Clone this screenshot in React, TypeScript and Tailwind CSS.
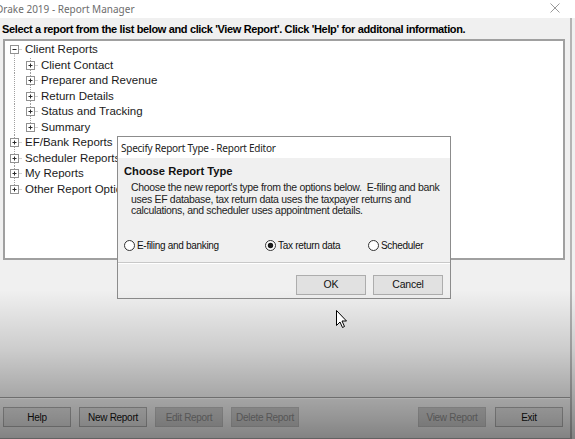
import React from "react";

type Pos = "first" | "mid" | "last" | "solo";

function Cell({ vline, box, hline = true }: { vline?: Pos | "full" | "none"; box?: "plus" | "minus"; hline?: boolean }) {
  let y0 = 0;
  let y1 = 15.5;
  if (vline === "first") y0 = 7.5;
  if (vline === "last") y1 = 7.5;
  return (
    <svg width="16" height="15.5" viewBox="0 0 16 15.5" className="shrink-0 block">
      {vline && vline !== "none" && (
        <line x1="8.5" y1={y0} x2="8.5" y2={y1} stroke="#a0a0a0" strokeWidth="1" strokeDasharray="1 1" />
      )}
      {hline && <line x1="8.5" y1="7.5" x2="16" y2="7.5" stroke="#a0a0a0" strokeWidth="1" strokeDasharray="1 1" />}
      {box && (
        <g>
          <rect x="4.5" y="3.5" width="8" height="8" fill="#ffffff" stroke="#919191" strokeWidth="1" />
          <line x1="6.5" y1="7.5" x2="10.5" y2="7.5" stroke="#2b2b2b" strokeWidth="1" />
          {box === "plus" && <line x1="8.5" y1="5.5" x2="8.5" y2="9.5" stroke="#2b2b2b" strokeWidth="1" />}
        </g>
      )}
    </svg>
  );
}

function TreeRow({ children, cells }: { children: React.ReactNode; cells: React.ReactNode }) {
  return (
    <div className="flex items-center h-[15.5px]">
      {cells}
      <span className="ml-[3px] whitespace-nowrap leading-none text-[11.5px] text-[#1a1a1a]">{children}</span>
    </div>
  );
}

function Btn({ children, disabled }: { children: React.ReactNode; disabled?: boolean }) {
  return (
    <div
      className={
        "w-[68px] h-[20px] flex items-center justify-center text-[10px] tracking-[-0.3px] whitespace-nowrap border " +
        (disabled
          ? "bg-[#cccccc] border-[#bfbfbf] text-[#8a8a8a]"
          : "bg-[#e1e1e1] border-[#adadad] text-[#111]")
      }
    >
      {children}
    </div>
  );
}

function Radio({ checked, label }: { checked?: boolean; label: string }) {
  return (
    <div className="flex items-center gap-[2px]">
      <svg width="11" height="11" viewBox="0 0 11 11" className="block">
        <circle cx="5.5" cy="5.5" r="5" fill="#ffffff" stroke="#333333" strokeWidth="1" />
        {checked && <circle cx="5.5" cy="5.5" r="2.7" fill="#1a1a1a" />}
      </svg>
      <span className="text-[10px] text-[#111] leading-none tracking-[-0.3px] whitespace-nowrap">{label}</span>
    </div>
  );
}

export default function App() {
  const level1 = ["Client Contact", "Preparer and Revenue", "Return Details", "Status and Tracking", "Summary"];
  const roots = ["EF/Bank Reports", "Scheduler Reports", "My Reports", "Other Report Options"];
  return (
    <div className="relative w-[575px] h-[439px] overflow-hidden bg-[#f0f0f0] font-['Liberation_Sans',Arial,sans-serif]">
      {/* title bar */}
      <div className="h-[18px] bg-white flex items-center justify-between">
        <span className="ml-[-4px] text-[10px] text-[#6d6d6d] font-['Noto_Sans',sans-serif] leading-none whitespace-nowrap">Drake 2019 - Report Manager</span>
        <svg width="10" height="10" viewBox="0 0 10 10" className="mr-[15px] mb-[2px]">
          <path d="M0.5 0.5 L9.5 9.5 M9.5 0.5 L0.5 9.5" stroke="#9a9a9a" strokeWidth="1" />
        </svg>
      </div>
      {/* window body */}
      <div className="w-[572px] h-[421px] border-r-2 border-[#b4b4b4] border-b flex flex-col">
        <div className="pt-[6px] pl-[2px] h-[21px] text-[11px] font-bold text-black leading-none whitespace-nowrap tracking-[-0.36px]">
          Select a report from the list below and click 'View Report'. Click 'Help' for additonal information.
        </div>
        <div className="ml-[3px] w-[562px] h-[221px] bg-white border-2 border-[#a0a0a0] pl-[1px] pt-[1px]">
          <TreeRow cells={<Cell vline="first" box="minus" />}>Client Reports</TreeRow>
          {level1.map((l, i) => (
            <TreeRow
              key={l}
              cells={
                <>
                  <Cell vline="full" hline={false} />
                  <Cell vline={i === level1.length - 1 ? "last" : "full"} box="plus" />
                </>
              }
            >
              {l}
            </TreeRow>
          ))}
          {roots.map((l, i) => (
            <TreeRow key={l} cells={<Cell vline={i === roots.length - 1 ? "last" : "full"} box="plus" />}>
              {l}
            </TreeRow>
          ))}
        </div>
        <div className="flex-1" />
        <div className="h-[2px] border-t border-[#a0a0a0] border-b border-b-white" />
        <div className="mt-[8px] mb-[11px] ml-[3px] w-[560px] flex justify-between">
          <div className="flex gap-[8px]">
            <Btn>Help</Btn>
            <Btn>New Report</Btn>
            <Btn disabled>Edit Report</Btn>
            <Btn disabled>Delete Report</Btn>
          </div>
          <div className="flex gap-[9px]">
            <Btn disabled>View Report</Btn>
            <Btn>Exit</Btn>
          </div>
        </div>
      </div>

      {/* dialog */}
      <div className="absolute left-[117px] top-[136px] w-[334px] h-[163px] border border-[#8c8c8c] bg-[#f0f0f0] flex flex-col">
        <div className="h-[21px] bg-white flex items-center pl-[3px]">
          <span className="text-[10px] text-[#222] font-['Noto_Sans',sans-serif] leading-none tracking-[-0.25px] whitespace-nowrap">Specify Report Type - Report Editor</span>
        </div>
        <div className="pl-[6px] pt-[8px] text-[11.2px] font-bold text-[#111] leading-none">Choose Report Type</div>
        <div className="pl-[13px] pt-[5px] text-[10.5px] leading-[11.6px] text-[#222] tracking-[-0.32px] whitespace-pre">
          {"Choose the new report's type from the options below.  E-filing and bank\nuses EF database, tax return data uses the taxpayer returns and\ncalculations, and scheduler uses appointment details."}
        </div>
        <div className="flex items-center pl-[6px] mt-[22px] h-[14px]">
          <div className="w-[141px]"><Radio label="E-filing and banking" /></div>
          <div className="w-[103px]"><Radio checked label="Tax return data" /></div>
          <Radio label="Scheduler" />
        </div>
        <div className="mt-[9px] h-[2px] border-t border-[#c8c8c8] border-b border-b-white" />
        <div className="flex justify-end gap-[7px] pr-[7px] mt-[11px]">
          <div className="w-[70px] h-[20px] flex items-center justify-center border border-[#adadad] bg-[#e1e1e1] text-[10.5px] tracking-[-0.2px] text-[#111]">OK</div>
          <div className="w-[70px] h-[20px] flex items-center justify-center border border-[#adadad] bg-[#e1e1e1] text-[10.5px] tracking-[-0.2px] text-[#111]">Cancel</div>
        </div>
      </div>

      {/* darkening overlay */}
      <div className="pointer-events-none absolute left-0 right-0 top-[290px] bottom-0 bg-[linear-gradient(to_bottom,rgba(0,0,0,0)_0%,rgba(0,0,0,0.15)_40%,rgba(0,0,0,0.38)_86%,rgba(0,0,0,0.46)_100%)]" />

      {/* cursor */}
      <svg width="12" height="19" viewBox="0 0 12 19" className="absolute left-[336px] top-[310px]">
        <path d="M0.5 0.5 L0.5 15.5 L4 12 L6.5 17.5 L8.5 16.5 L6 11 L10.5 11 Z" fill="#ffffff" stroke="#000000" strokeWidth="1" strokeLinejoin="miter" />
      </svg>
    </div>
  );
}
